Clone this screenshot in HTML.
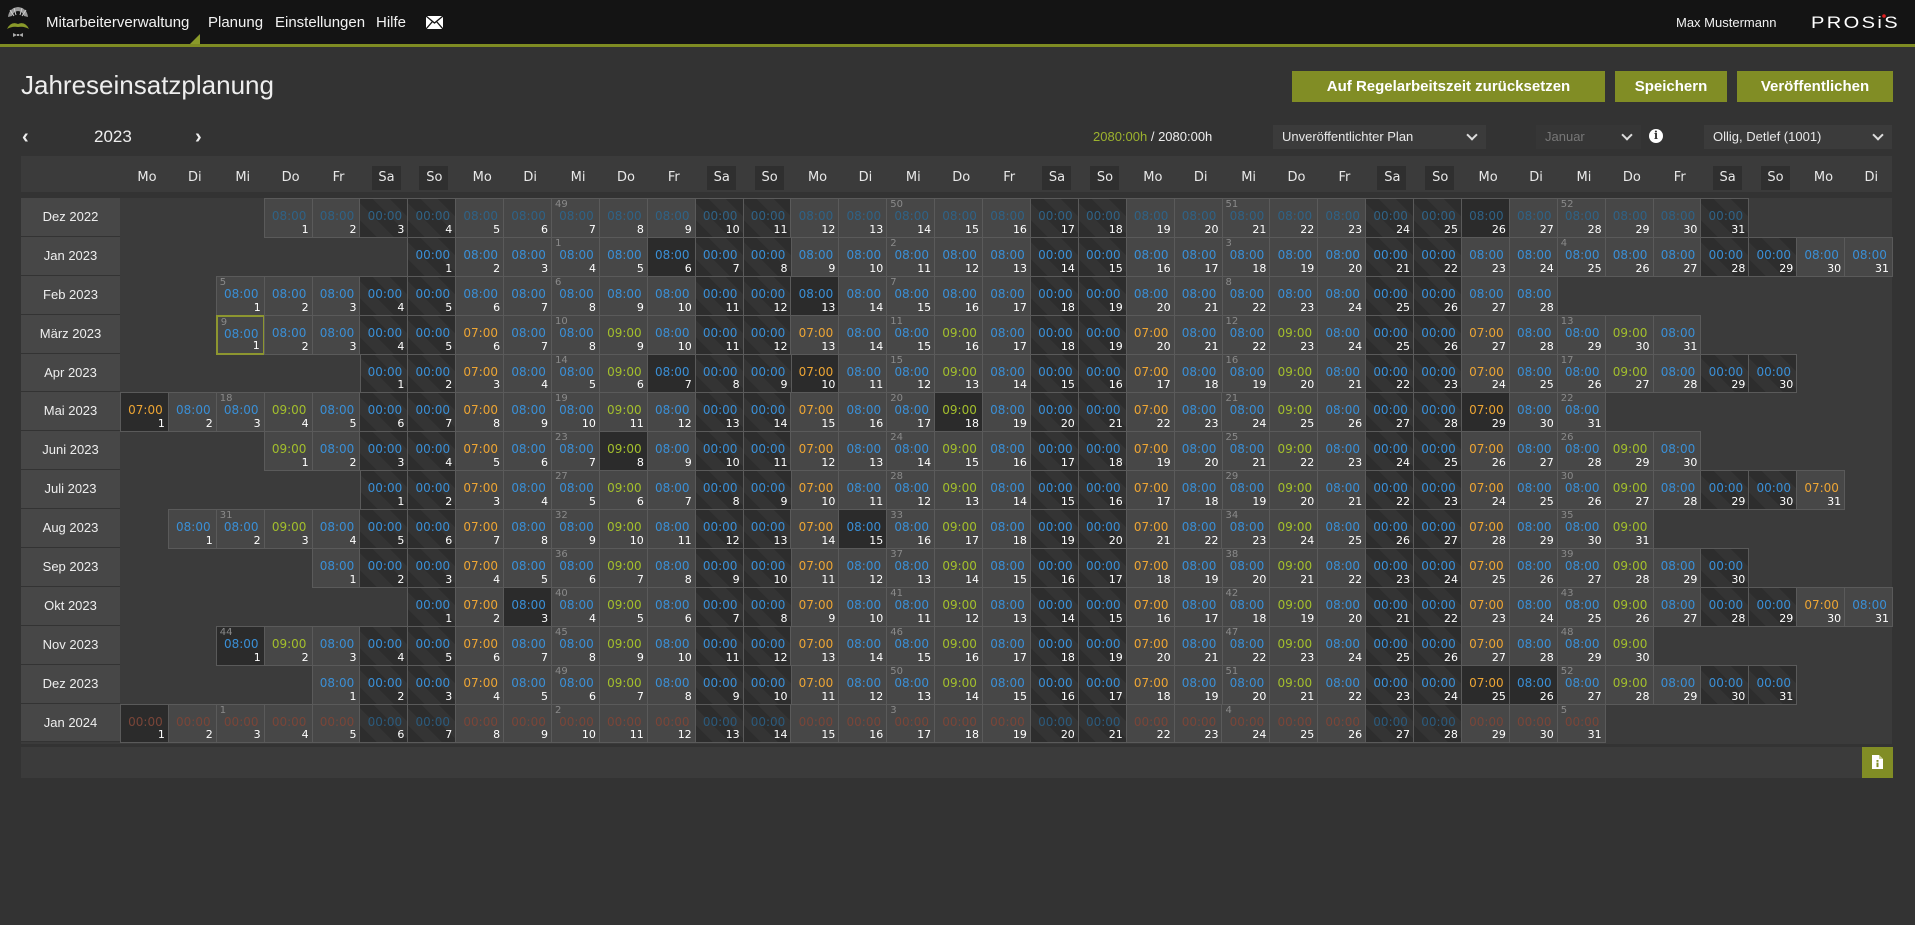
<!DOCTYPE html>
<html><head><meta charset="utf-8"><style>
*{margin:0;padding:0}
body{width:1915px;height:925px;background:#333;font-family:"Liberation Sans",sans-serif;color:#eee;position:relative;overflow:hidden}
.nav{position:absolute;left:0;top:0;width:1915px;height:44px;background:#141414;border-bottom:3px solid #7f8c23}
.nav span{position:absolute;top:14px;font-size:15px;color:#f2f2f2}
.tri{position:absolute;left:190px;top:34px;width:0;height:0;border-left:10px solid transparent;border-bottom:10px solid #8a9a2a}
h1{position:absolute;left:21px;top:70px;font-size:26px;font-weight:normal;color:#eee}
.btn{position:absolute;top:71px;height:31px;background:#818d25;color:#fff;font-weight:bold;font-size:15px;line-height:31px;text-align:center}
.ctl{position:absolute;font-size:13px}
.sel{position:absolute;top:125px;height:24px;background:#3b3b3b;font-size:13px;line-height:24px;padding-left:9px;box-sizing:border-box;color:#e8e8e8}
.sel:after{content:"";position:absolute;right:10px;top:6px;width:6px;height:6px;border-right:2px solid #ddd;border-bottom:2px solid #ddd;transform:rotate(45deg)}
.hdr{position:absolute;left:21px;top:156px;width:1871px;height:36px;background:#3b3b3b}
.hdr u{position:absolute;top:10px;width:47.9px;margin-left:3px;text-align:center;text-decoration:none;font-size:13px;font-family:"DejaVu Sans",sans-serif;color:#e8e8e8;line-height:24px}
.hdr u.we:before{content:"";position:absolute;left:9px;top:0;width:29px;height:24px;background:#2f2f2f;z-index:-1}
.hdr u.we{z-index:1}
.body{position:absolute;left:21px;top:198px;width:1871px;height:546px;background:#3b3b3b}
.r{display:flex;height:38.9px}
.l{width:99px;flex:none;height:37.9px;background:#474747;border-bottom:1px solid #333;font-size:13px;line-height:38px;text-align:center;color:#eee}
.r em{flex:none;display:block}
i{flex:none;display:block;width:48.9px;height:39.9px;margin-right:-1px;margin-bottom:-1px;box-sizing:border-box;border:1px solid #5a5a5a;background:#474747;position:relative;font-style:normal;color:#3a8fd6;font:12px "DejaVu Sans",sans-serif;text-align:center;padding-top:10px;padding-left:2px}
i b{position:absolute;right:3px;bottom:1px;color:#fff;font-weight:normal;font-size:11px}
i s{position:absolute;left:3px;top:0;color:#8a8a8a;text-decoration:none;font-size:10px}
i.w{background:repeating-linear-gradient(45deg,#2d2d2d 0 12px,#343434 12px 24px)}
i.h{background:#2b2b2b}
i.o{color:#eda534}
i.g{color:#a3bf2c}
i.rd{color:#7a4538}
.dim i{color:#2f6286}
i.dd{color:#2b5a7c}
i.sel1{border:2px solid #8d9630}
.foot{position:absolute;left:21px;top:747px;width:1871px;height:31px;background:#3b3b3b}
.fb{position:absolute;left:1862px;top:747px;width:31px;height:31px;background:#818d25}
</style></head><body>
<div class="nav">
<svg style="position:absolute;left:5px;top:5px" width="26" height="34" viewBox="0 0 26 34">
<path d="M3 12 Q4 3 13 2 Q22 3 23 12 L19 11 Q17 6 13 6 Q9 6 7 11Z" fill="#9a9a9a"/>
<path d="M5 5 L9 11 M9 3 L11 10 M17 3 L15 10 M21 5 L17 11" stroke="#cfcfcf" stroke-width="1"/>
<path d="M2 24 Q6 16 13 19 Q20 16 24 24 Q19 21 13 22 Q7 21 2 24Z" fill="#8a9a2a"/>
<path d="M8 28 L12 30 L8 32Z M18 28 L14 30 L18 32Z" fill="#aaa"/><rect x="12" y="29" width="2" height="2" fill="#aaa"/>
</svg>
<span style="left:46px">Mitarbeiterverwaltung</span>
<span style="left:208px">Planung</span>
<span style="left:275px">Einstellungen</span>
<span style="left:376px">Hilfe</span>
<svg style="position:absolute;left:426px;top:16px" width="17" height="13" viewBox="0 0 17 13"><rect width="17" height="13" fill="#fff"/><path d="M0 0 L8.5 7 L17 0 M0 13 L6.5 5.5 M17 13 L10.5 5.5" stroke="#141414" stroke-width="1.3" fill="none"/></svg>
<span style="left:1676px;font-size:13px;top:15px">Max Mustermann</span>
<svg style="position:absolute;left:1811px;top:13px" width="90" height="17"><text x="0" y="15" font-family="Liberation Sans,sans-serif" font-size="17" fill="#fff" textLength="89" lengthAdjust="spacingAndGlyphs" letter-spacing="2">PROSiS</text><circle cx="73" cy="3" r="1.8" fill="#e02020"/></svg>
</div>
<div class="tri"></div>
<h1>Jahreseinsatzplanung</h1>
<div class="btn" style="left:1292px;width:313px">Auf Regelarbeitszeit zurücksetzen</div>
<div class="btn" style="left:1615px;width:112px">Speichern</div>
<div class="btn" style="left:1737px;width:156px">Veröffentlichen</div>
<div class="ctl" style="left:22px;top:126px;font-size:20px;font-weight:bold">‹</div>
<div class="ctl" style="left:94px;top:127px;font-size:17px">2023</div>
<div class="ctl" style="left:195px;top:126px;font-size:20px;font-weight:bold">›</div>
<div class="ctl" style="left:1093px;top:129px"><span style="color:#9cb22e">2080:00h</span> / 2080:00h</div>
<div class="sel" style="left:1273px;width:213px">Unveröffentlichter Plan</div>
<div class="sel" style="left:1536px;width:105px;background:#363636;color:#777">Januar</div>
<div style="position:absolute;left:1649px;top:129px;width:14px;height:14px;border-radius:50%;background:#fff;color:#333;font:bold 11px 'DejaVu Serif',serif;text-align:center;line-height:14px">i</div>
<div class="sel" style="left:1704px;width:188px">Ollig, Detlef (1001)</div>
<div class="hdr">
<u style="left:99px">Mo</u><u style="left:146.9px">Di</u><u style="left:194.8px">Mi</u><u style="left:242.7px">Do</u><u style="left:290.6px">Fr</u><u class="we" style="left:338.5px">Sa</u><u class="we" style="left:386.4px">So</u>
<u style="left:434.3px">Mo</u><u style="left:482.2px">Di</u><u style="left:530.1px">Mi</u><u style="left:578px">Do</u><u style="left:625.9px">Fr</u><u class="we" style="left:673.8px">Sa</u><u class="we" style="left:721.7px">So</u>
<u style="left:769.6px">Mo</u><u style="left:817.5px">Di</u><u style="left:865.4px">Mi</u><u style="left:913.3px">Do</u><u style="left:961.2px">Fr</u><u class="we" style="left:1009.1px">Sa</u><u class="we" style="left:1057px">So</u>
<u style="left:1104.9px">Mo</u><u style="left:1152.8px">Di</u><u style="left:1200.7px">Mi</u><u style="left:1248.6px">Do</u><u style="left:1296.5px">Fr</u><u class="we" style="left:1344.4px">Sa</u><u class="we" style="left:1392.3px">So</u>
<u style="left:1440.2px">Mo</u><u style="left:1488.1px">Di</u><u style="left:1536px">Mi</u><u style="left:1583.9px">Do</u><u style="left:1631.8px">Fr</u><u class="we" style="left:1679.7px">Sa</u><u class="we" style="left:1727.6px">So</u>
<u style="left:1775.5px">Mo</u><u style="left:1823.4px">Di</u>
</div>
<div class="body">
<div class="r dim"><span class="l">Dez 2022</span><em style="width:143.7px"></em><i>08:00<b>1</b></i><i>08:00<b>2</b></i><i class="w">00:00<b>3</b></i><i class="w">00:00<b>4</b></i><i>08:00<b>5</b></i><i>08:00<b>6</b></i><i><s>49</s>08:00<b>7</b></i><i>08:00<b>8</b></i><i>08:00<b>9</b></i><i class="w">00:00<b>10</b></i><i class="w">00:00<b>11</b></i><i>08:00<b>12</b></i><i>08:00<b>13</b></i><i><s>50</s>08:00<b>14</b></i><i>08:00<b>15</b></i><i>08:00<b>16</b></i><i class="w">00:00<b>17</b></i><i class="w">00:00<b>18</b></i><i>08:00<b>19</b></i><i>08:00<b>20</b></i><i><s>51</s>08:00<b>21</b></i><i>08:00<b>22</b></i><i>08:00<b>23</b></i><i class="w">00:00<b>24</b></i><i class="w">00:00<b>25</b></i><i class="h">08:00<b>26</b></i><i>08:00<b>27</b></i><i><s>52</s>08:00<b>28</b></i><i>08:00<b>29</b></i><i>08:00<b>30</b></i><i class="w">00:00<b>31</b></i></div>
<div class="r"><span class="l">Jan 2023</span><em style="width:287.4px"></em><i class="w">00:00<b>1</b></i><i>08:00<b>2</b></i><i>08:00<b>3</b></i><i><s>1</s>08:00<b>4</b></i><i>08:00<b>5</b></i><i class="h">08:00<b>6</b></i><i class="w">00:00<b>7</b></i><i class="w">00:00<b>8</b></i><i>08:00<b>9</b></i><i>08:00<b>10</b></i><i><s>2</s>08:00<b>11</b></i><i>08:00<b>12</b></i><i>08:00<b>13</b></i><i class="w">00:00<b>14</b></i><i class="w">00:00<b>15</b></i><i>08:00<b>16</b></i><i>08:00<b>17</b></i><i><s>3</s>08:00<b>18</b></i><i>08:00<b>19</b></i><i>08:00<b>20</b></i><i class="w">00:00<b>21</b></i><i class="w">00:00<b>22</b></i><i>08:00<b>23</b></i><i>08:00<b>24</b></i><i><s>4</s>08:00<b>25</b></i><i>08:00<b>26</b></i><i>08:00<b>27</b></i><i class="w">00:00<b>28</b></i><i class="w">00:00<b>29</b></i><i>08:00<b>30</b></i><i>08:00<b>31</b></i></div>
<div class="r"><span class="l">Feb 2023</span><em style="width:95.8px"></em><i><s>5</s>08:00<b>1</b></i><i>08:00<b>2</b></i><i>08:00<b>3</b></i><i class="w">00:00<b>4</b></i><i class="w">00:00<b>5</b></i><i>08:00<b>6</b></i><i>08:00<b>7</b></i><i><s>6</s>08:00<b>8</b></i><i>08:00<b>9</b></i><i>08:00<b>10</b></i><i class="w">00:00<b>11</b></i><i class="w">00:00<b>12</b></i><i class="h">08:00<b>13</b></i><i>08:00<b>14</b></i><i><s>7</s>08:00<b>15</b></i><i>08:00<b>16</b></i><i>08:00<b>17</b></i><i class="w">00:00<b>18</b></i><i class="w">00:00<b>19</b></i><i>08:00<b>20</b></i><i>08:00<b>21</b></i><i><s>8</s>08:00<b>22</b></i><i>08:00<b>23</b></i><i>08:00<b>24</b></i><i class="w">00:00<b>25</b></i><i class="w">00:00<b>26</b></i><i>08:00<b>27</b></i><i>08:00<b>28</b></i></div>
<div class="r"><span class="l">März 2023</span><em style="width:95.8px"></em><i class="sel1"><s>9</s>08:00<b>1</b></i><i>08:00<b>2</b></i><i>08:00<b>3</b></i><i class="w">00:00<b>4</b></i><i class="w">00:00<b>5</b></i><i class="o">07:00<b>6</b></i><i>08:00<b>7</b></i><i><s>10</s>08:00<b>8</b></i><i class="g">09:00<b>9</b></i><i>08:00<b>10</b></i><i class="w">00:00<b>11</b></i><i class="w">00:00<b>12</b></i><i class="o">07:00<b>13</b></i><i>08:00<b>14</b></i><i><s>11</s>08:00<b>15</b></i><i class="g">09:00<b>16</b></i><i>08:00<b>17</b></i><i class="w">00:00<b>18</b></i><i class="w">00:00<b>19</b></i><i class="o">07:00<b>20</b></i><i>08:00<b>21</b></i><i><s>12</s>08:00<b>22</b></i><i class="g">09:00<b>23</b></i><i>08:00<b>24</b></i><i class="w">00:00<b>25</b></i><i class="w">00:00<b>26</b></i><i class="o">07:00<b>27</b></i><i>08:00<b>28</b></i><i><s>13</s>08:00<b>29</b></i><i class="g">09:00<b>30</b></i><i>08:00<b>31</b></i></div>
<div class="r"><span class="l">Apr 2023</span><em style="width:239.5px"></em><i class="w">00:00<b>1</b></i><i class="w">00:00<b>2</b></i><i class="o">07:00<b>3</b></i><i>08:00<b>4</b></i><i><s>14</s>08:00<b>5</b></i><i class="g">09:00<b>6</b></i><i class="h">08:00<b>7</b></i><i class="w">00:00<b>8</b></i><i class="w">00:00<b>9</b></i><i class="o h">07:00<b>10</b></i><i>08:00<b>11</b></i><i><s>15</s>08:00<b>12</b></i><i class="g">09:00<b>13</b></i><i>08:00<b>14</b></i><i class="w">00:00<b>15</b></i><i class="w">00:00<b>16</b></i><i class="o">07:00<b>17</b></i><i>08:00<b>18</b></i><i><s>16</s>08:00<b>19</b></i><i class="g">09:00<b>20</b></i><i>08:00<b>21</b></i><i class="w">00:00<b>22</b></i><i class="w">00:00<b>23</b></i><i class="o">07:00<b>24</b></i><i>08:00<b>25</b></i><i><s>17</s>08:00<b>26</b></i><i class="g">09:00<b>27</b></i><i>08:00<b>28</b></i><i class="w">00:00<b>29</b></i><i class="w">00:00<b>30</b></i></div>
<div class="r"><span class="l">Mai 2023</span><i class="o h">07:00<b>1</b></i><i>08:00<b>2</b></i><i><s>18</s>08:00<b>3</b></i><i class="g">09:00<b>4</b></i><i>08:00<b>5</b></i><i class="w">00:00<b>6</b></i><i class="w">00:00<b>7</b></i><i class="o">07:00<b>8</b></i><i>08:00<b>9</b></i><i><s>19</s>08:00<b>10</b></i><i class="g">09:00<b>11</b></i><i>08:00<b>12</b></i><i class="w">00:00<b>13</b></i><i class="w">00:00<b>14</b></i><i class="o">07:00<b>15</b></i><i>08:00<b>16</b></i><i><s>20</s>08:00<b>17</b></i><i class="g h">09:00<b>18</b></i><i>08:00<b>19</b></i><i class="w">00:00<b>20</b></i><i class="w">00:00<b>21</b></i><i class="o">07:00<b>22</b></i><i>08:00<b>23</b></i><i><s>21</s>08:00<b>24</b></i><i class="g">09:00<b>25</b></i><i>08:00<b>26</b></i><i class="w">00:00<b>27</b></i><i class="w">00:00<b>28</b></i><i class="o h">07:00<b>29</b></i><i>08:00<b>30</b></i><i><s>22</s>08:00<b>31</b></i></div>
<div class="r"><span class="l">Juni 2023</span><em style="width:143.7px"></em><i class="g">09:00<b>1</b></i><i>08:00<b>2</b></i><i class="w">00:00<b>3</b></i><i class="w">00:00<b>4</b></i><i class="o">07:00<b>5</b></i><i>08:00<b>6</b></i><i><s>23</s>08:00<b>7</b></i><i class="g h">09:00<b>8</b></i><i>08:00<b>9</b></i><i class="w">00:00<b>10</b></i><i class="w">00:00<b>11</b></i><i class="o">07:00<b>12</b></i><i>08:00<b>13</b></i><i><s>24</s>08:00<b>14</b></i><i class="g">09:00<b>15</b></i><i>08:00<b>16</b></i><i class="w">00:00<b>17</b></i><i class="w">00:00<b>18</b></i><i class="o">07:00<b>19</b></i><i>08:00<b>20</b></i><i><s>25</s>08:00<b>21</b></i><i class="g">09:00<b>22</b></i><i>08:00<b>23</b></i><i class="w">00:00<b>24</b></i><i class="w">00:00<b>25</b></i><i class="o">07:00<b>26</b></i><i>08:00<b>27</b></i><i><s>26</s>08:00<b>28</b></i><i class="g">09:00<b>29</b></i><i>08:00<b>30</b></i></div>
<div class="r"><span class="l">Juli 2023</span><em style="width:239.5px"></em><i class="w">00:00<b>1</b></i><i class="w">00:00<b>2</b></i><i class="o">07:00<b>3</b></i><i>08:00<b>4</b></i><i><s>27</s>08:00<b>5</b></i><i class="g">09:00<b>6</b></i><i>08:00<b>7</b></i><i class="w">00:00<b>8</b></i><i class="w">00:00<b>9</b></i><i class="o">07:00<b>10</b></i><i>08:00<b>11</b></i><i><s>28</s>08:00<b>12</b></i><i class="g">09:00<b>13</b></i><i>08:00<b>14</b></i><i class="w">00:00<b>15</b></i><i class="w">00:00<b>16</b></i><i class="o">07:00<b>17</b></i><i>08:00<b>18</b></i><i><s>29</s>08:00<b>19</b></i><i class="g">09:00<b>20</b></i><i>08:00<b>21</b></i><i class="w">00:00<b>22</b></i><i class="w">00:00<b>23</b></i><i class="o">07:00<b>24</b></i><i>08:00<b>25</b></i><i><s>30</s>08:00<b>26</b></i><i class="g">09:00<b>27</b></i><i>08:00<b>28</b></i><i class="w">00:00<b>29</b></i><i class="w">00:00<b>30</b></i><i class="o">07:00<b>31</b></i></div>
<div class="r"><span class="l">Aug 2023</span><em style="width:47.9px"></em><i>08:00<b>1</b></i><i><s>31</s>08:00<b>2</b></i><i class="g">09:00<b>3</b></i><i>08:00<b>4</b></i><i class="w">00:00<b>5</b></i><i class="w">00:00<b>6</b></i><i class="o">07:00<b>7</b></i><i>08:00<b>8</b></i><i><s>32</s>08:00<b>9</b></i><i class="g">09:00<b>10</b></i><i>08:00<b>11</b></i><i class="w">00:00<b>12</b></i><i class="w">00:00<b>13</b></i><i class="o">07:00<b>14</b></i><i class="h">08:00<b>15</b></i><i><s>33</s>08:00<b>16</b></i><i class="g">09:00<b>17</b></i><i>08:00<b>18</b></i><i class="w">00:00<b>19</b></i><i class="w">00:00<b>20</b></i><i class="o">07:00<b>21</b></i><i>08:00<b>22</b></i><i><s>34</s>08:00<b>23</b></i><i class="g">09:00<b>24</b></i><i>08:00<b>25</b></i><i class="w">00:00<b>26</b></i><i class="w">00:00<b>27</b></i><i class="o">07:00<b>28</b></i><i>08:00<b>29</b></i><i><s>35</s>08:00<b>30</b></i><i class="g">09:00<b>31</b></i></div>
<div class="r"><span class="l">Sep 2023</span><em style="width:191.6px"></em><i>08:00<b>1</b></i><i class="w">00:00<b>2</b></i><i class="w">00:00<b>3</b></i><i class="o">07:00<b>4</b></i><i>08:00<b>5</b></i><i><s>36</s>08:00<b>6</b></i><i class="g">09:00<b>7</b></i><i>08:00<b>8</b></i><i class="w">00:00<b>9</b></i><i class="w">00:00<b>10</b></i><i class="o">07:00<b>11</b></i><i>08:00<b>12</b></i><i><s>37</s>08:00<b>13</b></i><i class="g">09:00<b>14</b></i><i>08:00<b>15</b></i><i class="w">00:00<b>16</b></i><i class="w">00:00<b>17</b></i><i class="o">07:00<b>18</b></i><i>08:00<b>19</b></i><i><s>38</s>08:00<b>20</b></i><i class="g">09:00<b>21</b></i><i>08:00<b>22</b></i><i class="w">00:00<b>23</b></i><i class="w">00:00<b>24</b></i><i class="o">07:00<b>25</b></i><i>08:00<b>26</b></i><i><s>39</s>08:00<b>27</b></i><i class="g">09:00<b>28</b></i><i>08:00<b>29</b></i><i class="w">00:00<b>30</b></i></div>
<div class="r"><span class="l">Okt 2023</span><em style="width:287.4px"></em><i class="w">00:00<b>1</b></i><i class="o">07:00<b>2</b></i><i class="h">08:00<b>3</b></i><i><s>40</s>08:00<b>4</b></i><i class="g">09:00<b>5</b></i><i>08:00<b>6</b></i><i class="w">00:00<b>7</b></i><i class="w">00:00<b>8</b></i><i class="o">07:00<b>9</b></i><i>08:00<b>10</b></i><i><s>41</s>08:00<b>11</b></i><i class="g">09:00<b>12</b></i><i>08:00<b>13</b></i><i class="w">00:00<b>14</b></i><i class="w">00:00<b>15</b></i><i class="o">07:00<b>16</b></i><i>08:00<b>17</b></i><i><s>42</s>08:00<b>18</b></i><i class="g">09:00<b>19</b></i><i>08:00<b>20</b></i><i class="w">00:00<b>21</b></i><i class="w">00:00<b>22</b></i><i class="o">07:00<b>23</b></i><i>08:00<b>24</b></i><i><s>43</s>08:00<b>25</b></i><i class="g">09:00<b>26</b></i><i>08:00<b>27</b></i><i class="w">00:00<b>28</b></i><i class="w">00:00<b>29</b></i><i class="o">07:00<b>30</b></i><i>08:00<b>31</b></i></div>
<div class="r"><span class="l">Nov 2023</span><em style="width:95.8px"></em><i class="h"><s>44</s>08:00<b>1</b></i><i class="g">09:00<b>2</b></i><i>08:00<b>3</b></i><i class="w">00:00<b>4</b></i><i class="w">00:00<b>5</b></i><i class="o">07:00<b>6</b></i><i>08:00<b>7</b></i><i><s>45</s>08:00<b>8</b></i><i class="g">09:00<b>9</b></i><i>08:00<b>10</b></i><i class="w">00:00<b>11</b></i><i class="w">00:00<b>12</b></i><i class="o">07:00<b>13</b></i><i>08:00<b>14</b></i><i><s>46</s>08:00<b>15</b></i><i class="g">09:00<b>16</b></i><i>08:00<b>17</b></i><i class="w">00:00<b>18</b></i><i class="w">00:00<b>19</b></i><i class="o">07:00<b>20</b></i><i>08:00<b>21</b></i><i><s>47</s>08:00<b>22</b></i><i class="g">09:00<b>23</b></i><i>08:00<b>24</b></i><i class="w">00:00<b>25</b></i><i class="w">00:00<b>26</b></i><i class="o">07:00<b>27</b></i><i>08:00<b>28</b></i><i><s>48</s>08:00<b>29</b></i><i class="g">09:00<b>30</b></i></div>
<div class="r"><span class="l">Dez 2023</span><em style="width:191.6px"></em><i>08:00<b>1</b></i><i class="w">00:00<b>2</b></i><i class="w">00:00<b>3</b></i><i class="o">07:00<b>4</b></i><i>08:00<b>5</b></i><i><s>49</s>08:00<b>6</b></i><i class="g">09:00<b>7</b></i><i>08:00<b>8</b></i><i class="w">00:00<b>9</b></i><i class="w">00:00<b>10</b></i><i class="o">07:00<b>11</b></i><i>08:00<b>12</b></i><i><s>50</s>08:00<b>13</b></i><i class="g">09:00<b>14</b></i><i>08:00<b>15</b></i><i class="w">00:00<b>16</b></i><i class="w">00:00<b>17</b></i><i class="o">07:00<b>18</b></i><i>08:00<b>19</b></i><i><s>51</s>08:00<b>20</b></i><i class="g">09:00<b>21</b></i><i>08:00<b>22</b></i><i class="w">00:00<b>23</b></i><i class="w">00:00<b>24</b></i><i class="o h">07:00<b>25</b></i><i class="h">08:00<b>26</b></i><i><s>52</s>08:00<b>27</b></i><i class="g">09:00<b>28</b></i><i>08:00<b>29</b></i><i class="w">00:00<b>30</b></i><i class="w">00:00<b>31</b></i></div>
<div class="r"><span class="l">Jan 2024</span><i class="rd h">00:00<b>1</b></i><i class="rd">00:00<b>2</b></i><i class="rd"><s>1</s>00:00<b>3</b></i><i class="rd">00:00<b>4</b></i><i class="rd">00:00<b>5</b></i><i class="w dd">00:00<b>6</b></i><i class="w dd">00:00<b>7</b></i><i class="rd">00:00<b>8</b></i><i class="rd">00:00<b>9</b></i><i class="rd"><s>2</s>00:00<b>10</b></i><i class="rd">00:00<b>11</b></i><i class="rd">00:00<b>12</b></i><i class="w dd">00:00<b>13</b></i><i class="w dd">00:00<b>14</b></i><i class="rd">00:00<b>15</b></i><i class="rd">00:00<b>16</b></i><i class="rd"><s>3</s>00:00<b>17</b></i><i class="rd">00:00<b>18</b></i><i class="rd">00:00<b>19</b></i><i class="w dd">00:00<b>20</b></i><i class="w dd">00:00<b>21</b></i><i class="rd">00:00<b>22</b></i><i class="rd">00:00<b>23</b></i><i class="rd"><s>4</s>00:00<b>24</b></i><i class="rd">00:00<b>25</b></i><i class="rd">00:00<b>26</b></i><i class="w dd">00:00<b>27</b></i><i class="w dd">00:00<b>28</b></i><i class="rd">00:00<b>29</b></i><i class="rd">00:00<b>30</b></i><i class="rd"><s>5</s>00:00<b>31</b></i></div>
</div>
<div class="foot"></div>
<div class="fb"><svg style="position:absolute;left:10px;top:8px" width="11" height="14" viewBox="0 0 11 14"><path d="M0 0 H7 L11 4 V14 H0Z" fill="#fff"/><path d="M7 0 V4 H11" fill="#cdd39a"/><rect x="4.5" y="5" width="2" height="1.8" fill="#818d25"/><rect x="4.5" y="7.6" width="2" height="4.5" fill="#818d25"/></svg></div>
</body></html>
